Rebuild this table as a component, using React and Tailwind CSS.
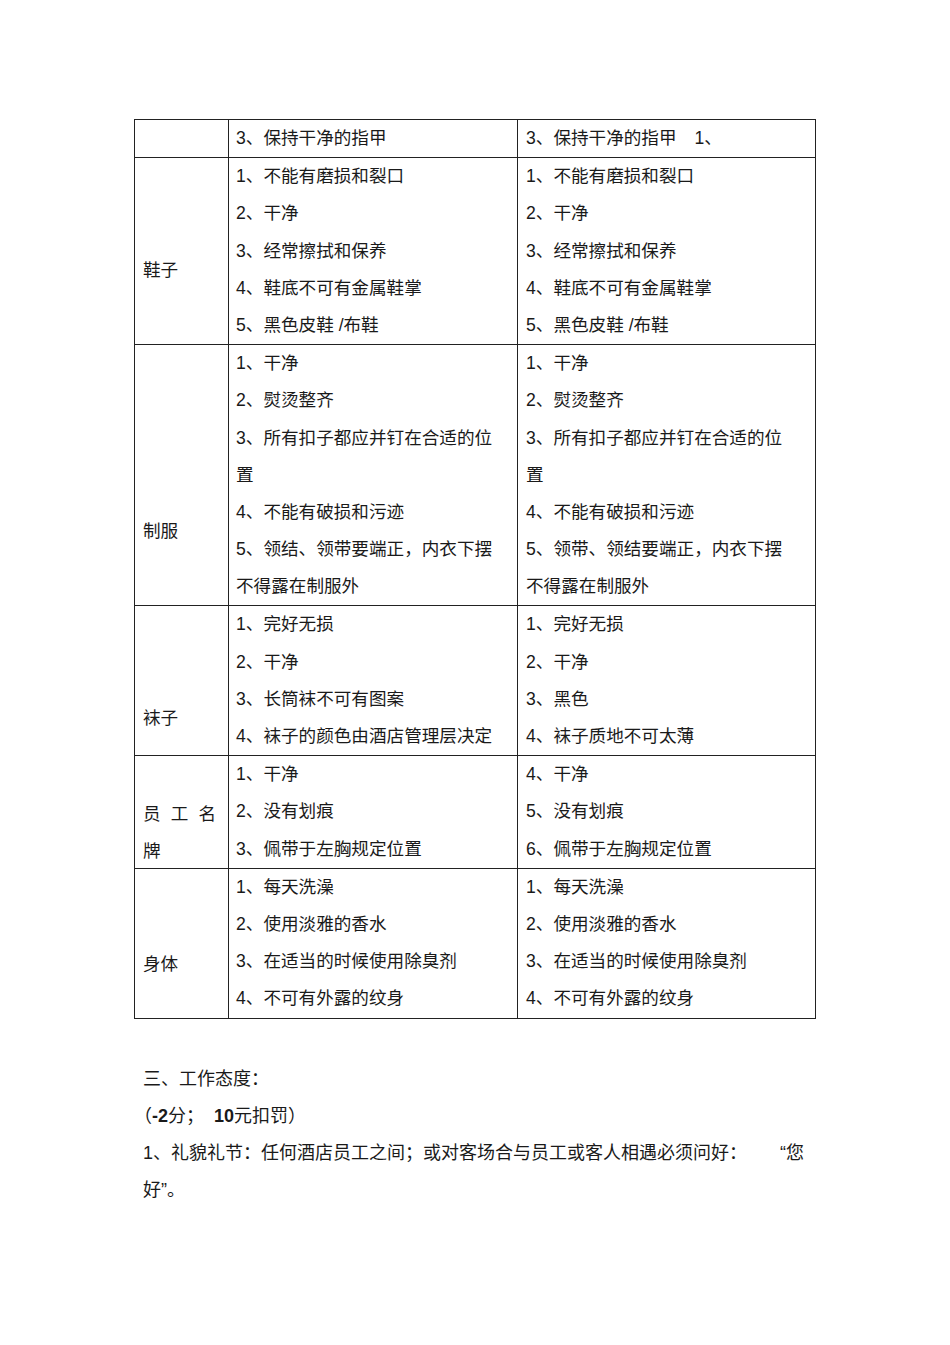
const font = {
  fontFamily: '"Liberation Sans", "Noto Sans CJK SC", sans-serif',
};

const rows = [
  {
    label: null,
    left: ["3、保持干净的指甲"],
    right: [
      <span key="a">
        3、保持干净的指甲<span className="ml-[18px]">1、</span>
      </span>,
    ],
  },
  {
    label: "鞋子",
    pad: "pt-[93.5px]",
    left: ["1、不能有磨损和裂口", "2、干净", "3、经常擦拭和保养", "4、鞋底不可有金属鞋掌", "5、黑色皮鞋 /布鞋"],
    right: ["1、不能有磨损和裂口", "2、干净", "3、经常擦拭和保养", "4、鞋底不可有金属鞋掌", "5、黑色皮鞋 /布鞋"],
  },
  {
    label: "制服",
    pad: "pt-[168px]",
    left: [
      "1、干净",
      "2、熨烫整齐",
      "3、所有扣子都应并钉在合适的位",
      "置",
      "4、不能有破损和污迹",
      "5、领结、领带要端正，内衣下摆",
      "不得露在制服外",
    ],
    right: [
      "1、干净",
      "2、熨烫整齐",
      "3、所有扣子都应并钉在合适的位",
      "置",
      "4、不能有破损和污迹",
      "5、领带、领结要端正，内衣下摆",
      "不得露在制服外",
    ],
  },
  {
    label: "袜子",
    pad: "pt-[93.5px]",
    left: ["1、完好无损", "2、干净", "3、长筒袜不可有图案", "4、袜子的颜色由酒店管理层决定"],
    right: ["1、完好无损", "2、干净", "3、黑色", "4、袜子质地不可太薄"],
  },
  {
    label: "badge",
    pad: "pt-[40px] -mb-[4px]",
    left: ["1、干净", "2、没有划痕", "3、佩带于左胸规定位置"],
    right: ["4、干净", "5、没有划痕", "6、佩带于左胸规定位置"],
  },
  {
    label: "身体",
    pad: "pt-[77px]",
    left: ["1、每天洗澡", "2、使用淡雅的香水", "3、在适当的时候使用除臭剂", "4、不可有外露的纹身"],
    right: ["1、每天洗澡", "2、使用淡雅的香水", "3、在适当的时候使用除臭剂", "4、不可有外露的纹身"],
  },
];

function Lines({ items }) {
  return items.map((t, i) => (
    <div key={i} className="h-[37.2px] leading-[37.2px] whitespace-nowrap">
      {t}
    </div>
  ));
}

function Label({ row }) {
  if (!row.label) return null;
  if (row.label === "badge") {
    return (
      <div className={row.pad}>
        <div className="flex justify-between w-[73px] leading-[37.2px]">
          <span>员</span>
          <span>工</span>
          <span>名</span>
        </div>
        <div className="leading-[37.2px]">牌</div>
      </div>
    );
  }
  return <div className={`${row.pad} leading-[37.2px]`}>{row.label}</div>;
}

export default function App() {
  return (
    <div className="w-[950px] min-h-[1345px] bg-white text-[#1a1a1a] pt-[119px]" style={font}>
      <div className="ml-[134px] w-[682px] border border-[#222] text-[17.6px]">
        {rows.map((row, i) => (
          <div key={i} className={`flex ${i > 0 ? "border-t border-[#222]" : ""}`}>
            <div className="w-[94px] shrink-0 border-r border-[#222] pl-[8px]">
              <Label row={row} />
            </div>
            <div className="w-[289px] shrink-0 border-r border-[#222] pl-[7px]">
              <Lines items={row.left} />
            </div>
            <div className="flex-1 pl-[8px]">
              <Lines items={row.right} />
            </div>
          </div>
        ))}
      </div>

      <div className="ml-[143px] w-[661px] mt-[42px] text-[18px] leading-[37px]">
        <div>三、工作态度：</div>
        <div className="-ml-[9px]">
          （<b>-2</b>分；<b className="ml-[10px]">10</b>元扣罚）
        </div>
        <div className="flex justify-between whitespace-nowrap">
          <span>1、礼貌礼节：任何酒店员工之间；或对客场合与员工或客人相遇必须问好：</span>
          <span>“您</span>
        </div>
        <div>好”。</div>
      </div>
    </div>
  );
}
